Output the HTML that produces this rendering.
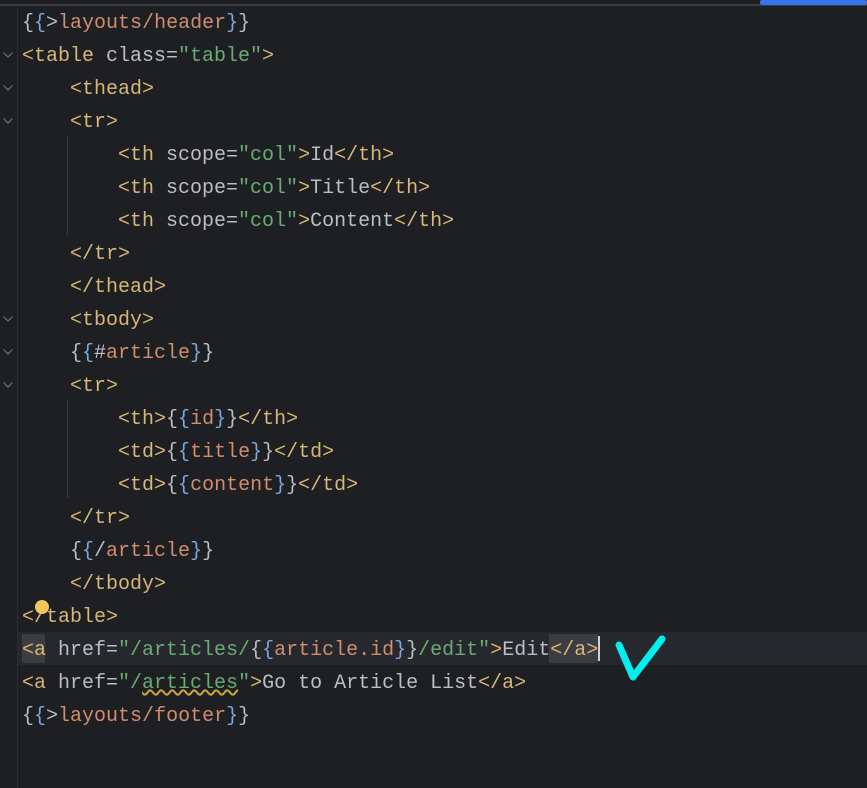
<!DOCTYPE html>
<html><head><meta charset="utf-8"><style>
html,body{margin:0;padding:0;background:#1e1f22;width:867px;height:788px;overflow:hidden;position:relative}
.top{position:absolute;left:0;top:4px;width:867px;height:2px;background:#393b40}
.blue{position:absolute;left:760px;top:0;width:107px;height:5px;background:#3574f0;border-radius:2px}
.gut{position:absolute;left:17px;top:6px;width:1px;height:782px;background:#2b2d30}
.cur{position:absolute;left:18px;top:632px;width:849px;height:33px;background:#26282e}
.guide{position:absolute;left:67px;width:1px;background:#393b40}
.line{position:absolute;left:22px;height:33px;line-height:33px;font-family:"Liberation Mono",monospace;font-size:20px;color:#bcbec4;white-space:pre}
.t{color:#d5b778}.s{color:#6aab73}.v{color:#cf8e6d}.b{color:#7ba7d9}
.fold{position:absolute;left:2px}
</style></head><body>
<div class="top"></div><div class="blue"></div><div class="gut"></div><div class="cur"></div>
<div class="guide" style="top:137px;height:98px"></div>
<div class="guide" style="top:401px;height:97px"></div>
<svg class="fold" style="top:51px" width="12" height="8"><path d="M1.5 1.5 L6 6 L10.5 1.5" fill="none" stroke="#6f737a" stroke-width="1.2"/></svg>
<svg class="fold" style="top:84px" width="12" height="8"><path d="M1.5 1.5 L6 6 L10.5 1.5" fill="none" stroke="#6f737a" stroke-width="1.2"/></svg>
<svg class="fold" style="top:117px" width="12" height="8"><path d="M1.5 1.5 L6 6 L10.5 1.5" fill="none" stroke="#6f737a" stroke-width="1.2"/></svg>
<svg class="fold" style="top:315px" width="12" height="8"><path d="M1.5 1.5 L6 6 L10.5 1.5" fill="none" stroke="#6f737a" stroke-width="1.2"/></svg>
<svg class="fold" style="top:348px" width="12" height="8"><path d="M1.5 1.5 L6 6 L10.5 1.5" fill="none" stroke="#6f737a" stroke-width="1.2"/></svg>
<svg class="fold" style="top:381px" width="12" height="8"><path d="M1.5 1.5 L6 6 L10.5 1.5" fill="none" stroke="#6f737a" stroke-width="1.2"/></svg>
<div class="line" style="top:7px">{<span class="b">{</span>&gt;<span class="v">layouts/header</span><span class="b">}</span>}</div>
<div class="line" style="top:40px"><span class="t">&lt;table</span> class=<span class="s">"table"</span><span class="t">&gt;</span></div>
<div class="line" style="top:73px">    <span class="t">&lt;thead&gt;</span></div>
<div class="line" style="top:106px">    <span class="t">&lt;tr&gt;</span></div>
<div class="line" style="top:139px">        <span class="t">&lt;th</span> scope=<span class="s">"col"</span><span class="t">&gt;</span>Id<span class="t">&lt;/th&gt;</span></div>
<div class="line" style="top:172px">        <span class="t">&lt;th</span> scope=<span class="s">"col"</span><span class="t">&gt;</span>Title<span class="t">&lt;/th&gt;</span></div>
<div class="line" style="top:205px">        <span class="t">&lt;th</span> scope=<span class="s">"col"</span><span class="t">&gt;</span>Content<span class="t">&lt;/th&gt;</span></div>
<div class="line" style="top:238px">    <span class="t">&lt;/tr&gt;</span></div>
<div class="line" style="top:271px">    <span class="t">&lt;/thead&gt;</span></div>
<div class="line" style="top:304px">    <span class="t">&lt;tbody&gt;</span></div>
<div class="line" style="top:337px">    {<span class="b">{</span>#<span class="v">article</span><span class="b">}</span>}</div>
<div class="line" style="top:370px">    <span class="t">&lt;tr&gt;</span></div>
<div class="line" style="top:403px">        <span class="t">&lt;th&gt;</span>{<span class="b">{</span><span class="v">id</span><span class="b">}</span>}<span class="t">&lt;/th&gt;</span></div>
<div class="line" style="top:436px">        <span class="t">&lt;td&gt;</span>{<span class="b">{</span><span class="v">title</span><span class="b">}</span>}<span class="t">&lt;/td&gt;</span></div>
<div class="line" style="top:469px">        <span class="t">&lt;td&gt;</span>{<span class="b">{</span><span class="v">content</span><span class="b">}</span>}<span class="t">&lt;/td&gt;</span></div>
<div class="line" style="top:502px">    <span class="t">&lt;/tr&gt;</span></div>
<div class="line" style="top:535px">    {<span class="b">{</span>/<span class="v">article</span><span class="b">}</span>}</div>
<div class="line" style="top:568px">    <span class="t">&lt;/tbody&gt;</span></div>
<div class="line" style="top:601px"><span class="t">&lt;/table&gt;</span></div>
<div style="position:absolute;left:35px;top:600px;width:14px;height:14px;border-radius:50%;background:#f2c55c"></div>
<div style="position:absolute;left:22px;top:634px;width:23px;height:29px;background:#3b3d42"></div>
<div style="position:absolute;left:549px;top:634px;width:49px;height:29px;background:#3b3d42"></div>
<div class="line" style="top:634px"><span class="t">&lt;a</span> href=<span class="s">"/articles/</span>{<span class="b">{</span><span class="v">article.id</span><span class="b">}</span>}<span class="s">/edit"</span><span class="t">&gt;</span>Edit<span class="t">&lt;/a&gt;</span></div>
<div style="position:absolute;left:598px;top:636px;width:2px;height:25px;background:#ced0d6"></div>
<svg style="position:absolute;left:612px;top:630px" width="60" height="54"><path d="M7 15 L21 47 L50 9" fill="none" stroke="#00f0f0" stroke-width="7" stroke-linecap="round" stroke-linejoin="round"/></svg>
<div class="line" style="top:667px"><span class="t">&lt;a</span> href=<span class="s">"/<span style="text-decoration:underline wavy #c9a83c">articles</span>"</span><span class="t">&gt;</span>Go to Article List<span class="t">&lt;/a&gt;</span></div>
<div class="line" style="top:700px">{<span class="b">{</span>&gt;<span class="v">layouts/footer</span><span class="b">}</span>}</div>
</body></html>
